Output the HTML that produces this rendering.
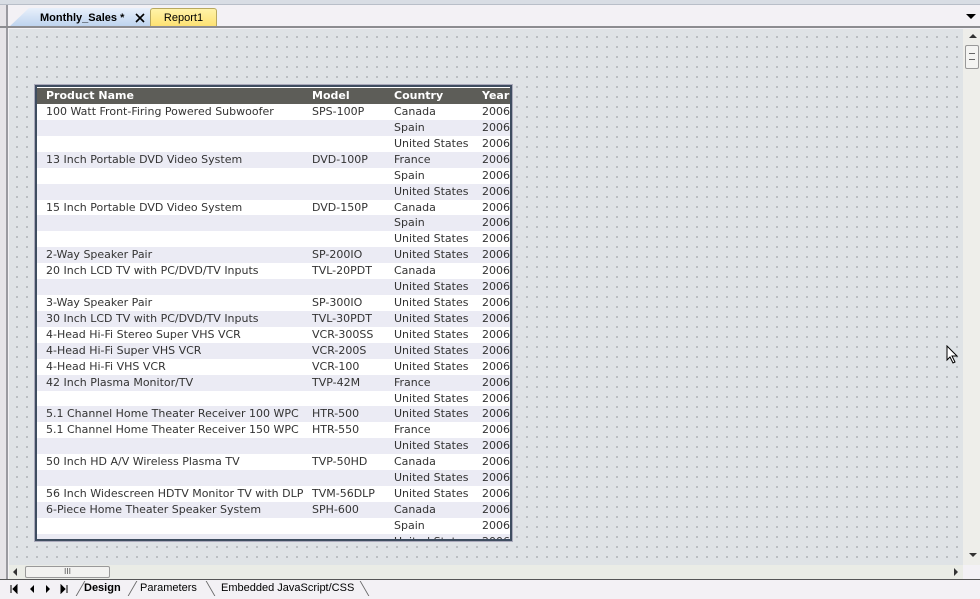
<!DOCTYPE html>
<html><head><style>
*{margin:0;padding:0;box-sizing:border-box}
body{width:980px;height:599px;overflow:hidden;background:#f3f1f5;font-family:"DejaVu Sans","Liberation Sans",sans-serif;position:relative}
.abs{position:absolute}
#canvas{left:9px;top:29px;width:954px;height:536px;background-color:#dfe3e6;background-image:radial-gradient(circle at 1px 1px,#8a8f94 0.6px,transparent 0.9px);background-size:10px 10px;background-position:7px 7px}
#tbl{left:35px;top:85px;width:477px;height:456px;border:2px solid #3e4d60;outline:1px solid #aab;background:#fff;overflow:hidden}
.row{position:absolute;left:0;width:473px;height:16px;font-size:11px;line-height:16px;color:#333;white-space:nowrap}
.row span{position:absolute;top:0}
.hd{background:#5d5d58;color:#fff;font-weight:bold;font-size:11px}
.lv{background:#ebebf4}
</style></head><body>
<div class="abs" style="left:0;top:0;width:980px;height:5px;background:#d8dde4;border-bottom:1px solid #b8bec8"></div>
<div class="abs" style="left:0;top:5px;width:8px;height:575px;background:#e6e4e8;border-right:2px solid #9a9aa0"></div>
<!-- tabs -->
<div class="abs" style="left:9px;top:8px;width:143px;height:19px;background:linear-gradient(#e8f0fb,#bcd2ee);clip-path:polygon(0 100%,20px 0,100% 0,100% 100%);"></div>
<div class="abs" style="left:40px;top:9px;font-size:11px;font-weight:bold;color:#000;line-height:18px;font-family:'Liberation Sans',sans-serif">Monthly_Sales *</div>
<svg class="abs" style="left:135px;top:13px" width="10" height="10"><path d="M1 1L9 9M9 1L1 9" stroke="#000" stroke-width="1.6"/></svg>
<div class="abs" style="left:150px;top:8px;width:67px;height:19px;background:linear-gradient(#fff3a8,#fde070);border:1px solid #b8a860;border-bottom:none;border-radius:3px 3px 0 0;font-size:11px;text-align:center;line-height:18px;color:#000;font-family:'Liberation Sans',sans-serif">Report1</div>
<div class="abs" style="left:0;top:26px;width:980px;height:2px;background:#8c8c90"></div>
<div class="abs" style="left:966px;top:14px;width:0;height:0;border-left:5px solid transparent;border-right:5px solid transparent;border-top:5px solid #000"></div>
<div id="canvas" class="abs"></div>
<!-- v scroll -->
<div class="abs" style="left:963px;top:29px;width:17px;height:536px;background:#eeeeea"></div>
<div class="abs" style="left:969px;top:34px;border-left:4px solid transparent;border-right:4px solid transparent;border-bottom:4px solid #333"></div>
<div class="abs" style="left:965px;top:45px;width:14px;height:24px;background:#f4f4f2;border:1px solid #999;border-radius:2px"></div>
<div class="abs" style="left:969px;top:53px;width:6px;height:7px;border-top:1px solid #666;border-bottom:1px solid #666"></div>
<div class="abs" style="left:969px;top:553px;border-left:4px solid transparent;border-right:4px solid transparent;border-top:4px solid #333"></div>
<!-- h scroll -->
<div class="abs" style="left:9px;top:565px;width:954px;height:14px;background:#eaece6"></div>
<div class="abs" style="left:13px;top:568px;border-top:4px solid transparent;border-bottom:4px solid transparent;border-right:4px solid #333"></div>
<div class="abs" style="left:25px;top:566px;width:85px;height:12px;background:#f2f2f0;border:1px solid #999;border-radius:2px;font-size:8px;text-align:center;line-height:10px;color:#555">III</div>
<div class="abs" style="left:954px;top:568px;border-top:4px solid transparent;border-bottom:4px solid transparent;border-left:4px solid #333"></div>
<div class="abs" style="left:0;top:579px;width:980px;height:1px;background:#555"></div>
<!-- bottom tabs nav -->
<svg class="abs" style="left:10px;top:584px" width="60" height="10"><path d="M1 1V9M7 1L3 5L7 9Z" fill="#000" stroke="#000"/><path d="M24 1L20 5L24 9Z" fill="#000"/><path d="M36 1L40 5L36 9Z" fill="#000"/><path d="M51 1L55 5L51 9ZM57 1V9" fill="#000" stroke="#000"/></svg>
<div class="abs" style="left:84px;top:581px;font-size:11px;font-weight:bold;line-height:14px;font-family:'Liberation Sans',sans-serif">Design</div>
<div class="abs" style="left:140px;top:581px;font-size:11px;line-height:14px;font-family:'Liberation Sans',sans-serif">Parameters</div>
<div class="abs" style="left:221px;top:581px;font-size:11px;line-height:14px;font-family:'Liberation Sans',sans-serif">Embedded JavaScript/CSS</div>
<div class="abs" style="left:132px;top:581px;width:1px;height:15px;background:#666;transform:skewX(-30deg)"></div>
<div class="abs" style="left:210px;top:581px;width:1px;height:15px;background:#666;transform:skewX(30deg)"></div>
<div class="abs" style="left:364px;top:581px;width:1px;height:15px;background:#666;transform:skewX(30deg)"></div>
<div class="abs" style="left:80px;top:581px;width:1px;height:15px;background:#666;transform:skewX(-30deg)"></div>
<!-- cursor -->
<svg class="abs" style="left:946px;top:345px" width="14" height="20"><path d="M1 1 L1 15 L4 12 L7 18 L9 17 L6 11 L11 11 Z" fill="#fff" stroke="#000"/></svg>
<div id="tbl" class="abs">
<div class="row hd" style="top:1px"><span style="left:9px">Product Name</span><span style="left:275px">Model</span><span style="left:357px">Country</span><span style="left:445px">Year</span></div>
<div id="rows"></div>
</div>
<script>
var d=[["100 Watt Front-Firing Powered Subwoofer","SPS-100P","Canada"],["","","Spain"],["","","United States"],["13 Inch Portable DVD Video System","DVD-100P","France"],["","","Spain"],["","","United States"],["15 Inch Portable DVD Video System","DVD-150P","Canada"],["","","Spain"],["","","United States"],["2-Way Speaker Pair","SP-200IO","United States"],["20 Inch LCD TV with PC/DVD/TV Inputs","TVL-20PDT","Canada"],["","","United States"],["3-Way Speaker Pair","SP-300IO","United States"],["30 Inch LCD TV with PC/DVD/TV Inputs","TVL-30PDT","United States"],["4-Head Hi-Fi Stereo Super VHS VCR","VCR-300SS","United States"],["4-Head Hi-Fi Super VHS VCR","VCR-200S","United States"],["4-Head Hi-Fi VHS VCR","VCR-100","United States"],["42 Inch Plasma Monitor/TV","TVP-42M","France"],["","","United States"],["5.1 Channel Home Theater Receiver 100 WPC","HTR-500","United States"],["5.1 Channel Home Theater Receiver 150 WPC","HTR-550","France"],["","","United States"],["50 Inch HD A/V Wireless Plasma TV","TVP-50HD","Canada"],["","","United States"],["56 Inch Widescreen HDTV Monitor TV with DLP","TVM-56DLP","United States"],["6-Piece Home Theater Speaker System","SPH-600","Canada"],["","","Spain"],["","","United States"]];
var h="";d.forEach(function(r,i){h+='<div class="row'+(i%2?' lv':'')+'" style="top:'+(17+i*15.92).toFixed(2)+'px"><span style="left:9px">'+r[0]+'</span><span style="left:275px">'+r[1]+'</span><span style="left:357px">'+r[2]+'</span><span style="left:445px">2006</span></div>';});
document.getElementById("rows").innerHTML=h;
</script>
</body></html>
